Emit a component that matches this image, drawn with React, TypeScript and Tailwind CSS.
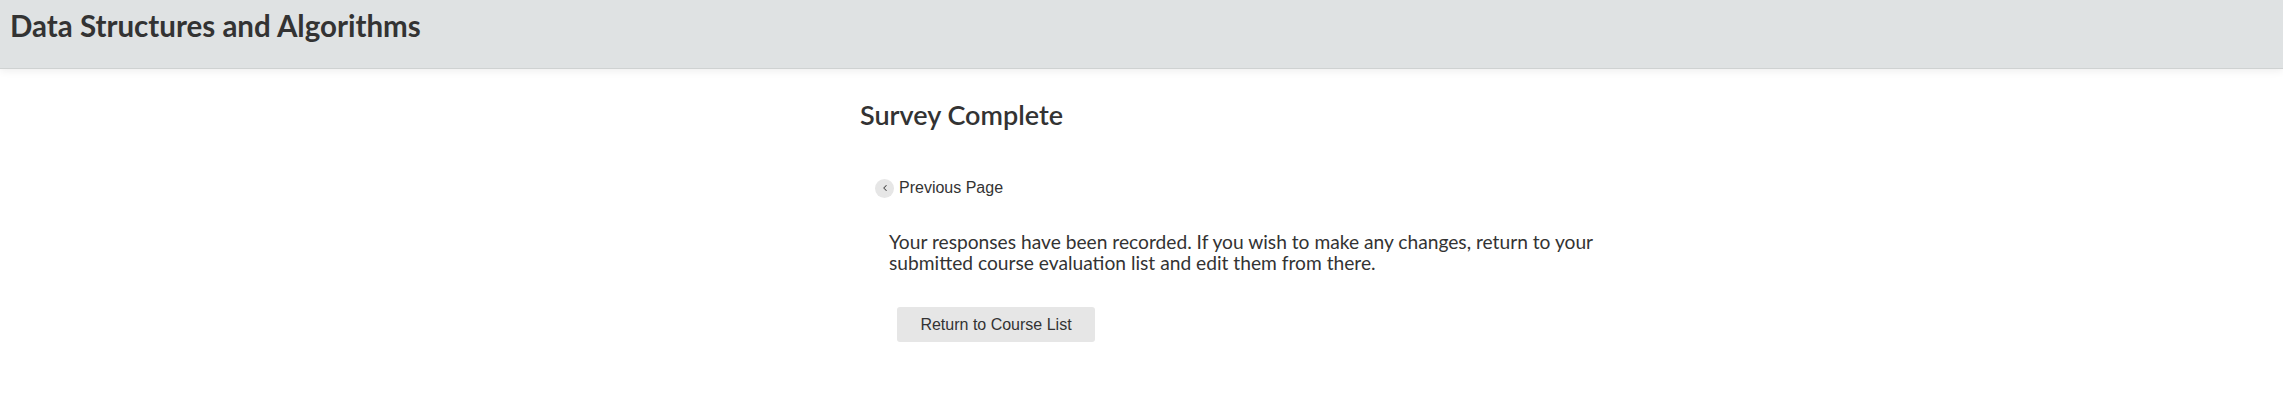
import { ChevronLeft } from 'lucide-react';

const sans = "font-['Lato','Open_Sans',sans-serif]";
const arial = "font-['Liberation_Sans',Arial,sans-serif]";

// Top bar with the course name.
const CourseHeader = ({ title }: { title: string }) => (
  <header className="relative z-10 h-[69px] border-b border-[#cfd2d2] bg-[#dfe2e3] shadow-[0_2px_8px_rgba(0,0,0,0.07)]">
    <h1 className={`${sans} pl-[10px] pt-[8px] text-[29.5px] font-bold leading-[36px] text-[#333]`}>{title}</h1>
  </header>
);

export default function App() {
  return (
    <div className="min-h-[411px] bg-white">
      <CourseHeader title="Data Structures and Algorithms" />

      <main className="ml-[860px] w-[800px] pt-[30px]">
        <h2 className={`${sans} text-[27px] font-semibold leading-[32px] text-[#333]`}>Survey Complete</h2>

        <a href="#" className={`${arial} mt-[47px] ml-[15px] flex items-center gap-[5px] text-[16px] leading-[20px] text-[#333]`}>
          <span className="flex h-[19px] w-[19px] items-center justify-center rounded-full bg-[#e6e6e6]">
            <ChevronLeft size={10} strokeWidth={2.5} className="text-[#444]" />
          </span>
          Previous Page
        </a>

        <p className={`${sans} mt-[33px] ml-[29px] text-[19.2px] leading-[21px] text-[#333]`}>
          Your responses have been recorded. If you wish to make any changes, return to your
          <br />
          submitted course evaluation list and edit them from there.
        </p>

        <button
          type="button"
          className={`${arial} mt-[34px] ml-[37px] block h-[35px] w-[198px] rounded-[3px] bg-[#e6e6e6] text-[16px] text-[#333]`}
        >
          Return to Course List
        </button>
      </main>
    </div>
  );
}
